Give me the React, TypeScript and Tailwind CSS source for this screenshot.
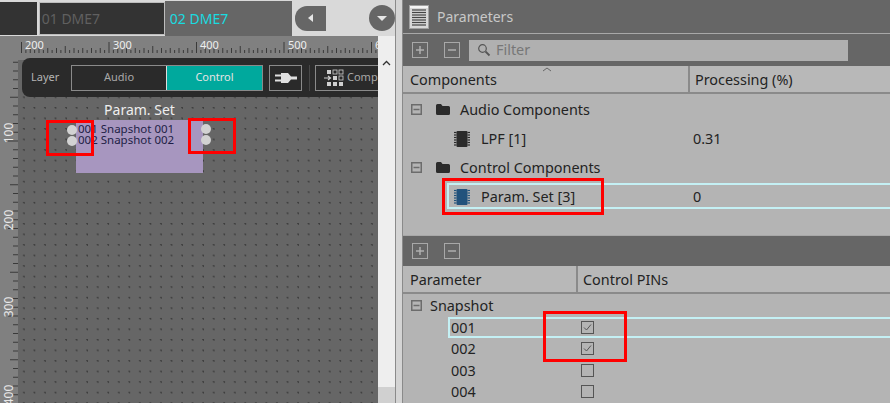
import type { ReactNode } from "react"

const hTicks = Array.from({ length: 82 }, (_, i) => i)
const vTicks = Array.from({ length: 40 }, (_, i) => i)

function TopRuler() {
  return (
    <svg width="357" height="24" className="block">
      {hTicks.map((i) => {
        const x = 0.5 + i * 4.375
        const big = i % 20 === 0
        const mid = i % 10 === 0
        const small = i % 2 === 0
        return (
          <line key={i} x1={x} x2={x} y1={big ? 6 : mid ? 10 : small ? 12 : 14} y2={17} stroke="#3a3a3a" strokeWidth="1" />
        )
      })}
    </svg>
  )
}

function LeftRuler() {
  return (
    <svg width="18" height="343" className="absolute top-0 left-0">
      {vTicks.map((i) => {
        const y = 2.25 + i * 8.75
        const big = i % 10 === 9
        const mid = i % 10 === 4
        return (
          <line key={i} x1={big ? 8 : mid ? 10 : 13} x2={18} y1={y} y2={y} stroke="#3a3a3a" strokeWidth="1" />
        )
      })}
    </svg>
  )
}

function RulerNum({ children, className }: { children: ReactNode; className: string }) {
  return (
    <span className={`absolute -left-[1px] origin-center -rotate-90 text-[12px] leading-none text-[#e8e8e8] ${className}`}>
      {children}
    </span>
  )
}

function ChipIcon({ color = "#2b2b2b" }: { color?: string }) {
  return (
    <svg width="18" height="18" viewBox="0 0 18 18" className="shrink-0">
      <rect x="3.5" y="1" width="11" height="16" rx="1" fill={color} />
      {[2.5, 5, 7.5, 10, 12.5, 15].map((y) => (
        <g key={y}>
          <line x1="1" x2="3.5" y1={y} y2={y} stroke={color} strokeWidth="1.2" />
          <line x1="14.5" x2="17" y1={y} y2={y} stroke={color} strokeWidth="1.2" />
        </g>
      ))}
    </svg>
  )
}

function FolderIcon() {
  return (
    <svg width="14" height="11" viewBox="0 0 14 11" className="shrink-0">
      <path d="M0 1.5 Q0 0 1.5 0 H5 L6.5 2 H12.5 Q14 2 14 3.5 V9.5 Q14 11 12.5 11 H1.5 Q0 11 0 9.5 Z" fill="#2b2b2b" />
    </svg>
  )
}

function Collapse() {
  return (
    <svg width="11" height="11" viewBox="0 0 11 11" className="shrink-0">
      <rect x="0.75" y="0.75" width="9.5" height="9.5" fill="none" stroke="#6c6c6c" strokeWidth="1.5" />
      <line x1="2.5" x2="8.5" y1="5.5" y2="5.5" stroke="#6c6c6c" strokeWidth="1.5" />
    </svg>
  )
}

function SquareBtn({ plus }: { plus?: boolean }) {
  return (
    <div className="flex size-4 items-center justify-center border border-[#a8a8a8] text-[#b4b4b4]">
      <svg width="10" height="10" viewBox="0 0 10 10">
        <line x1="1" x2="9" y1="5" y2="5" stroke="#b4b4b4" strokeWidth="1.4" />
        {plus && <line x1="5" x2="5" y1="1" y2="9" stroke="#b4b4b4" strokeWidth="1.4" />}
      </svg>
    </div>
  )
}

function Check({ on }: { on?: boolean }) {
  return (
    <div className="flex size-[13px] items-center justify-center border border-[#555555]">
      {on && (
        <svg width="9" height="9" viewBox="0 0 9 9">
          <path d="M1 4.5 L3.5 7 L8 1.5" fill="none" stroke="#555555" strokeWidth="1" />
        </svg>
      )}
    </div>
  )
}

function Toolbar() {
  return (
    <div className="absolute top-[-2px] left-[4px] flex h-[39px] w-[356px] items-center overflow-hidden rounded-l-lg bg-[#2a2a2a] pl-[9px]">
      <span className="w-10 shrink-0 text-[11px] text-[#b4b4b4]">Layer</span>
      <div className="flex h-[26px] w-[192px] shrink-0 border border-[#8a8a8a]">
        <div className="flex flex-1 items-center justify-center text-[11px] text-[#a8a8a8]">Audio</div>
        <div className="flex w-[96px] items-center justify-center border-l border-[#dddddd] bg-[#00a99d] text-[11px] text-[#e4e4e4]">Control</div>
      </div>
      <div className="ml-[6px] flex h-[26px] w-[33px] shrink-0 items-center justify-center border border-[#8a8a8a]">
        <svg width="22" height="12" viewBox="0 0 22 12">
          <path d="M6 1 H13 L16 4.5 H22 V7.5 H16 L13 11 H6 Z" fill="#e0e0e0" />
          <rect x="0" y="2.5" width="6" height="2" fill="#e0e0e0" />
          <rect x="0" y="7.5" width="6" height="2" fill="#e0e0e0" />
        </svg>
      </div>
      <div className="ml-[7px] h-[26px] w-px shrink-0 bg-[#484848]" />
      <div className="ml-[5px] flex h-[26px] w-[80px] shrink-0 items-center gap-[3px] border border-[#8a8a8a] pl-[8px]">
        <svg width="20" height="18" viewBox="0 0 20 18" className="shrink-0">
          <rect x="3" y="1" width="4" height="4" fill="#d0d0d0" />
          <rect x="9" y="1" width="4" height="4" fill="none" stroke="#d0d0d0" strokeWidth="0.8" />
          <rect x="15" y="1" width="4" height="4" fill="none" stroke="#d0d0d0" strokeWidth="0.8" />
          <path d="M0 9 H6 M4 7 L6.5 9 L4 11" fill="none" stroke="#d0d0d0" strokeWidth="1.2" />
          <rect x="9" y="7" width="4" height="4" fill="#d0d0d0" />
          <rect x="15" y="7" width="4" height="4" fill="none" stroke="#d0d0d0" strokeWidth="0.8" />
          <rect x="3" y="13" width="4" height="4" fill="#d0d0d0" />
          <rect x="9" y="13" width="4" height="4" fill="#d0d0d0" />
          <rect x="15" y="13" width="4" height="4" fill="#d0d0d0" />
        </svg>
        <span className="text-[11px] text-[#a8a8a8]">Comp</span>
      </div>
    </div>
  )
}

function TreeRow({ icon, label, value, indent, selected }: { icon: ReactNode; label: string; value?: string; indent: string; selected?: boolean }) {
  return (
    <div className={`relative flex h-[29px] items-center text-[14.4px] text-[#232323] ${indent}`}>
      {icon}
      <span className="ml-[10px]">{label}</span>
      {value && <span className="absolute left-[290px]">{value}</span>}
      {selected && <div className="absolute top-[1px] right-0 bottom-[2px] left-[44px] border-y-2 border-l-2 border-[#c4f0f4]" />}
    </div>
  )
}

export default function App() {
  return (
    <div className="flex h-[403px] w-[890px] overflow-hidden bg-[#c8c8c8] font-['Noto_Sans',sans-serif]">
      {/* left: project sheet */}
      <div className="flex w-[395px] shrink-0 flex-col">
        <div className="flex h-[36px] shrink-0 bg-[#d9d9d9]">
          <div className="mt-[2px] h-[33px] w-[37px] bg-[#333333]" />
          <div className="mt-[2px] ml-[2px] flex h-[33px] w-[127px] items-center border border-[#bdbdbd] bg-[#333333] pl-[2px] text-[14px] text-[#606060]">01 DME7</div>
          <div className="mt-[1px] flex h-[35px] w-[128px] items-center bg-[#666666] pl-[5px] text-[14px] text-[#19dbe0]">02 DME7</div>
          <div className="flex flex-1 items-center pl-[3px]">
            <div className="flex h-[25px] w-[31px] items-center justify-center rounded-l-[12px] bg-[#666666]">
              <div className="h-0 w-0 border-y-[4px] border-r-[5px] border-y-transparent border-r-[#e6e6e6]" />
            </div>
            <div className="ml-[43px] flex size-[26px] items-center justify-center rounded-full bg-[#666666]">
              <div className="h-0 w-0 border-x-[5px] border-t-[5px] border-x-transparent border-t-[#e6e6e6]" />
            </div>
          </div>
        </div>
        <div className="flex min-h-0 flex-1">
          <div className="relative flex-1 overflow-hidden bg-[#666666]">
            <div className="flex h-[24px] bg-[#808080]">
              <div className="w-[21px] shrink-0" />
              <div className="relative flex-1">
                <TopRuler />
                <span className="absolute top-[3px] left-[4px] text-[11px] leading-none text-[#eeeeee]">200</span>
                <span className="absolute top-[3px] left-[92px] text-[11px] leading-none text-[#eeeeee]">300</span>
                <span className="absolute top-[3px] left-[179px] text-[11px] leading-none text-[#eeeeee]">400</span>
                <span className="absolute top-[3px] left-[267px] text-[11px] leading-none text-[#eeeeee]">500</span>
                <span className="absolute top-[3px] left-[354px] w-[3px] overflow-hidden text-[11px] leading-none text-[#eeeeee]">6</span>
              </div>
            </div>
            <div className="flex h-[343px]">
              <div className="relative w-[18px] shrink-0 bg-[#808080]">
                <LeftRuler />
                <RulerNum className="top-[67px]">100</RulerNum>
                <RulerNum className="top-[154px]">200</RulerNum>
                <RulerNum className="top-[241px]">300</RulerNum>
                <RulerNum className="top-[329px]">400</RulerNum>
              </div>
              <div className="relative flex-1 bg-[#666666] bg-[radial-gradient(circle_at_6px_5.5px,#3c3c3c_0.7px,transparent_1.1px)] bg-[size:10.55px_10.55px]">
                <Toolbar />
                {/* Param. Set node */}
                <div className="absolute top-[43px] left-[58px] w-[127px] text-center text-[14px] leading-[14px] text-[#eeeeee]">Param. Set</div>
                <div className="absolute top-[60px] left-[58px] h-[53px] w-[127px] bg-[#a796bf] pt-[4px] pl-[2px] text-[11.5px] leading-[10.5px] whitespace-nowrap text-[#1e1e46]">
                  <div>001 Snapshot 001</div>
                  <div>002 Snapshot 002</div>
                </div>
                <div className="absolute top-[65px] left-[49px] size-[10px] rounded-full bg-[#d2d2d2]" />
                <div className="absolute top-[76px] left-[49px] size-[10px] rounded-full bg-[#d2d2d2]" />
                <div className="absolute top-[64px] left-[183px] size-[10px] rounded-full bg-[#d2d2d2]" />
                <div className="absolute top-[75px] left-[183px] size-[10px] rounded-full bg-[#d2d2d2]" />
                <div className="absolute top-[60px] left-[28px] h-[36px] w-[48px] border-[3px] border-[#ff0000]" />
                <div className="absolute top-[58px] left-[170px] h-[36px] w-[48px] border-[3px] border-[#ff0000]" />
              </div>
            </div>
          </div>
          <div className="flex w-[17px] shrink-0 flex-col bg-[#eeeeee]">
            <div className="flex h-[30px] items-end justify-center">
              <svg width="9" height="6" viewBox="0 0 9 6">
                <path d="M1 5 L4.5 1.5 L8 5" fill="none" stroke="#333333" strokeWidth="1.3" />
              </svg>
            </div>
            <div className="flex-1" />
            <div className="h-[16px] bg-[#d0d0d0]" />
          </div>
        </div>
      </div>
      {/* gutter */}
      <div className="flex w-[8px] shrink-0 bg-[#d4d4d4]">
        <div className="w-px bg-[#8a8a8a]" />
        <div className="flex-1" />
        <div className="w-px bg-[#8a8a8a]" />
      </div>
      {/* right: parameters */}
      <div className="flex min-w-0 flex-1 flex-col">
        <div className="flex h-[33px] shrink-0 items-center bg-[#666666] pl-[6px]">
          <svg width="20" height="24" viewBox="0 0 20 24">
            <rect x="0.5" y="0.5" width="19" height="23" fill="#d8d8d8" stroke="#a0a0a0" />
            <rect x="1" y="1" width="18" height="2" fill="#f4f4f4" />
            {[5, 7.5, 10, 12.5, 15, 17.5, 20].map((y) => (
              <line key={y} x1="3" x2="17" y1={y} y2={y} stroke="#444444" strokeWidth="1.2" />
            ))}
          </svg>
          <span className="ml-2 text-[14px] text-[#c8c8c8]">Parameters</span>
        </div>
        <div className="h-px shrink-0 bg-[#a8a8a8]" />
        <div className="flex h-[32px] shrink-0 items-center bg-[#666666] pl-[9px]">
          <SquareBtn plus />
          <div className="ml-4">
            <SquareBtn />
          </div>
          <div className="ml-[9px] flex h-[21px] w-[379px] items-center bg-[#b0b0b0] pl-2 text-[14.4px] text-[#777777]">
            <svg width="14" height="14" viewBox="0 0 14 14">
              <circle cx="5.5" cy="5.5" r="3.8" fill="none" stroke="#555555" strokeWidth="1.2" />
              <line x1="8.5" x2="12.5" y1="8.5" y2="12.5" stroke="#555555" strokeWidth="1.8" />
            </svg>
            <span className="ml-[5px]">Filter</span>
          </div>
        </div>
        <div className="relative flex h-[28px] shrink-0 border-b-2 border-[#8a8a8a] bg-[#b8b8b8] text-[14.4px] text-[#232323]">
          <div className="flex w-[287px] items-end border-r-2 border-[#8a8a8a] pb-[1px] pl-[7px]">Components</div>
          <div className="flex items-end pb-[1px] pl-[5px]">Processing (%)</div>
          <svg width="10" height="5" viewBox="0 0 10 5" className="absolute top-[1px] left-[139px]">
            <path d="M1 4 L5 1 L9 4" fill="none" stroke="#666666" strokeWidth="1" />
          </svg>
        </div>
        <div className="relative h-[141px] shrink-0 bg-[#b4b4b4] pt-[1px]">
          <TreeRow indent="pl-[8px]" label="Audio Components" icon={<><Collapse /><span className="w-[14px]" /><FolderIcon /></>} />
          <TreeRow indent="pl-[50px]" label="LPF [1]" value="0.31" icon={<ChipIcon />} />
          <TreeRow indent="pl-[8px]" label="Control Components" icon={<><Collapse /><span className="w-[14px]" /><FolderIcon /></>} />
          <TreeRow indent="pl-[50px]" label="Param. Set [3]" value="0" selected icon={<ChipIcon color="#22527c" />} />
          <div className="absolute top-[84px] left-[39px] h-[37px] w-[162px] border-[3px] border-[#ff0000]" />
        </div>
        <div className="h-px shrink-0 bg-[#a8a8a8]" />
        <div className="flex h-[30px] shrink-0 items-center gap-4 bg-[#666666] pl-[9px]">
          <SquareBtn plus />
          <SquareBtn />
        </div>
        <div className="flex h-[28px] shrink-0 border-b-2 border-[#8a8a8a] bg-[#b8b8b8] text-[14.4px] text-[#232323]">
          <div className="flex w-[175px] items-center border-r-2 border-[#8a8a8a] pt-[1px] pl-[7px]">Parameter</div>
          <div className="flex items-center pt-[1px] pl-[5px]">Control PINs</div>
        </div>
        <div className="relative min-h-0 flex-1 bg-[#b4b4b4] pt-[1px] text-[14.4px] leading-[21.5px] text-[#232323]">
          <div className="flex h-[21.5px] items-center pl-[8px]">
            <Collapse />
            <span className="ml-[8px]">Snapshot</span>
          </div>
          {["001", "002", "003", "004"].map((n, i) => (
            <div key={n} className="relative flex h-[21.5px] items-center pl-[48px]">
              {n}
              <div className="absolute left-[178px]">
                <Check on={i < 2} />
              </div>
            </div>
          ))}
          <div className="absolute top-[23px] right-0 left-[45px] h-[21px] border-y-2 border-l-2 border-[#c4f0f4]" />
          <div className="absolute top-[17px] left-[140px] h-[51px] w-[84px] border-[3px] border-[#ff0000]" />
        </div>
      </div>
    </div>
  )
}
